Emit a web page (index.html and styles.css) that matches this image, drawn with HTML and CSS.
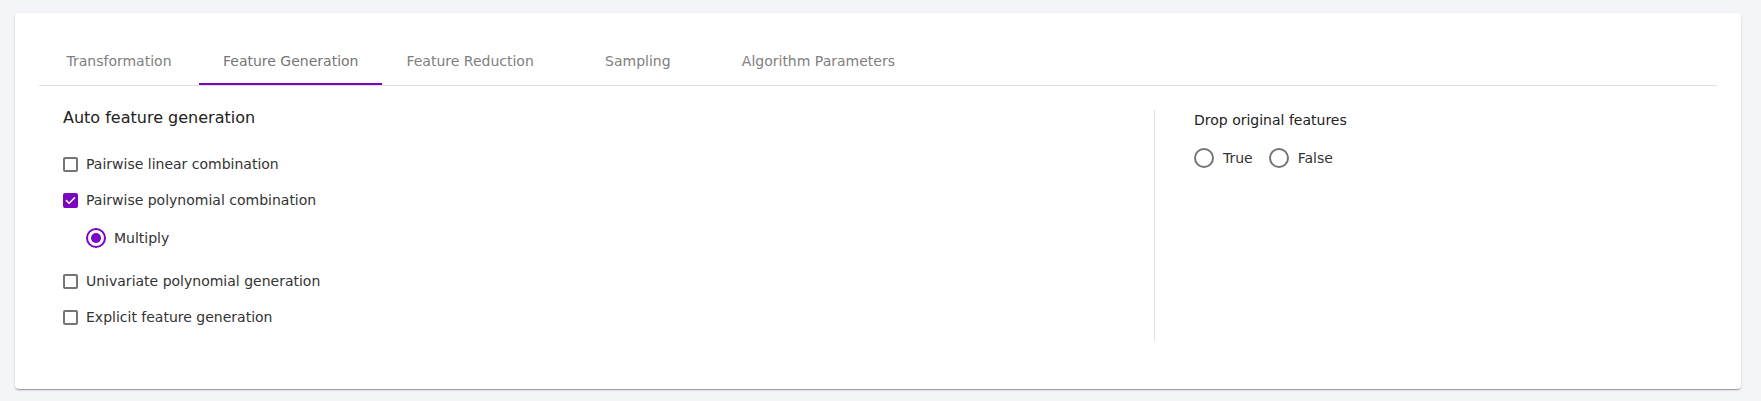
FILE: index.html
```html
<!DOCTYPE html>
<html lang="en">
<head>
<meta charset="utf-8">
<title>Feature Generation</title>
<link rel="stylesheet" href="styles.css">
</head>
<body>
<div class="page">
  <div class="card">
    <div class="tabs">
      <div class="tab">Transformation</div>
      <div class="tab active">Feature Generation</div>
      <div class="tab">Feature Reduction</div>
      <div class="tab">Sampling</div>
      <div class="tab">Algorithm Parameters</div>
    </div>
    <div class="panel">
      <div class="col-left">
        <div class="heading">Auto feature generation</div>
        <div class="options">
          <label class="row"><span class="checkbox"></span><span class="label">Pairwise linear combination</span></label>
          <label class="row"><span class="checkbox checked"><svg viewBox="0 0 15 15" width="15" height="15"><polyline points="3.4,7.6 6.1,10.2 11.6,4.7" fill="none" stroke="#fff" stroke-width="1.5" stroke-linecap="round" stroke-linejoin="round"/></svg></span><span class="label">Pairwise polynomial combination</span></label>
          <label class="row sub"><span class="radio checked"></span><span class="label">Multiply</span></label>
          <label class="row"><span class="checkbox"></span><span class="label">Univariate polynomial generation</span></label>
          <label class="row"><span class="checkbox"></span><span class="label">Explicit feature generation</span></label>
        </div>
      </div>
      <div class="col-right">
        <div class="subheading">Drop original features</div>
        <div class="radio-group">
          <label class="radio-opt"><span class="radio"></span><span class="label">True</span></label>
          <label class="radio-opt"><span class="radio"></span><span class="label">False</span></label>
        </div>
      </div>
    </div>
  </div>
</div>
</body>
</html>
```

FILE: styles.css
```css
* { box-sizing: border-box; }

html, body {
  margin: 0;
  padding: 0;
  background: #f4f5f9;
  font-family: "DejaVu Sans", "Noto Sans", sans-serif;
  font-size: 14px;
  color: #333;
}

.page {
  padding: 13px 20px 12px 15px;
}

.card {
  background: #fff;
  border-radius: 4px;
  padding: 24px;
  box-shadow: 0 2px 1px -1px rgba(0,0,0,0.2), 0 1px 1px 0 rgba(0,0,0,0.14), 0 1px 3px 0 rgba(0,0,0,0.12);
}

.tabs {
  display: flex;
  border-bottom: 1px solid #e0e0e0;
}

.tab {
  position: relative;
  height: 48px;
  min-width: 160px;
  padding: 0 24px;
  display: flex;
  align-items: center;
  justify-content: center;
  color: #808080;
  font-size: 14px;
  white-space: nowrap;
}

.tab.active {
  color: #757575;
}

.tab.active::after {
  content: "";
  position: absolute;
  left: 0;
  right: 0;
  bottom: 0;
  height: 2px;
  background: #7b06c2;
}

.panel {
  display: grid;
  grid-template-columns: 1115px 1fr;
  padding: 24px 0;
}

.col-left {
  padding: 0 24px 6px 24px;
}

.heading {
  font-size: 16px;
  line-height: 16px;
  color: #222;
}

.options {
  margin-top: 20px;
  display: flex;
  flex-direction: column;
}

.row {
  display: flex;
  align-items: center;
  height: 36px;
}

.row.sub {
  height: 40px;
  padding-left: 23px;
  margin-bottom: 5px;
}

.checkbox {
  width: 15px;
  height: 15px;
  border: 2px solid #757575;
  border-radius: 2px;
  margin-right: 8px;
  flex: none;
  display: flex;
}

.checkbox.checked {
  background: #7b06c2;
  border-color: #7b06c2;
}

.checkbox.checked svg {
  margin: -2px;
}

.radio {
  position: relative;
  width: 20px;
  height: 20px;
  border: 2px solid #757575;
  border-radius: 50%;
  margin-right: 8px;
  flex: none;
}

.radio.checked {
  border-color: #7b06c2;
}

.radio.checked::after {
  content: "";
  position: absolute;
  left: 3px;
  top: 3px;
  width: 10px;
  height: 10px;
  border-radius: 50%;
  background: #7b06c2;
}

.label {
  color: #333;
  white-space: nowrap;
}

.col-right {
  border-left: 1px solid #e0e0e0;
  padding-left: 39px;
}

.subheading {
  line-height: 20px;
  color: #222;
}

.radio-group {
  display: flex;
  align-items: center;
  gap: 16px;
  margin-top: 18px;
}

.radio-opt {
  display: flex;
  align-items: center;
}

.radio-opt .radio {
  margin-right: 9px;
}
```
